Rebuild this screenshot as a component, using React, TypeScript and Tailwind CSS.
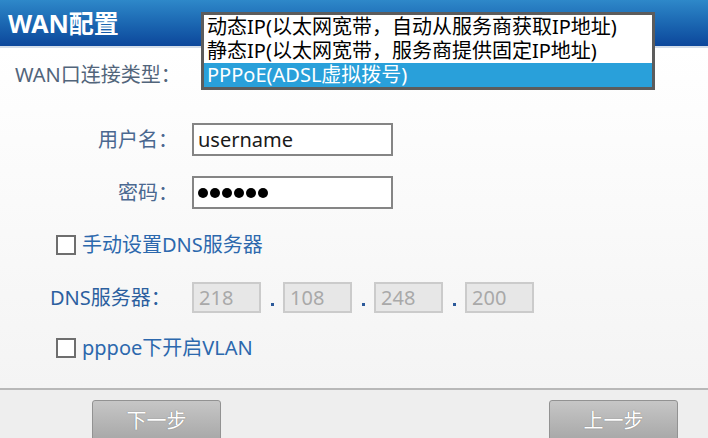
import React from "react";

const font = { fontFamily: '"Noto Sans", "Noto Sans CJK SC", sans-serif' };

function Checkbox({ label }: { label: string }) {
  return (
    <div className="flex items-center h-[20px] pl-[56px]">
      <div className="w-[20px] h-[20px] border-2 border-[#6e6e6e] bg-white" />
      <span className="ml-[6px] text-[20px] leading-none text-[#2c68ad] whitespace-nowrap">{label}</span>
    </div>
  );
}

function DnsBox({ v }: { v: string }) {
  return (
    <div className="w-[69px] h-[31px] border-2 border-[#cbcbcb] bg-[#e7e7e7] flex items-center pl-[5px] text-[20px] text-[#a9a9a9] leading-none">
      {v}
    </div>
  );
}

function Dot() {
  return (
    <div className="w-[22px] h-[31px] flex items-end justify-center pb-[7px]">
      <div className="w-[3px] h-[3px] bg-[#2c5a9a]" />
    </div>
  );
}

export default function App() {
  return (
    <div className="relative w-[708px] h-[438px] overflow-hidden flex flex-col bg-white" style={font}>
      <div className="h-[46px] shrink-0 bg-gradient-to-b from-[#2e88c9] to-[#0d479b] flex items-center pl-[8px]">
        <span className="text-[25px] font-bold text-white leading-none">WAN配置</span>
      </div>
      <div className="h-[2px] shrink-0 bg-[#d3dde9]" />
      <div className="flex-1 flex flex-col pt-[12px] bg-gradient-to-b from-white to-[#f4f4f4]">
        <div className="h-[30px] flex items-center pl-[15px] text-[20px] text-[#52657b] leading-none whitespace-nowrap">
          WAN口连接类型：
        </div>
        <div className="mt-[33px] h-[33px] flex items-center">
          <div className="w-[178px] text-right text-[20px] text-[#4a6890] leading-none whitespace-nowrap">用户名：</div>
          <div className="ml-[14px] w-[201px] h-[33px] border-2 border-[#858585] bg-white flex items-center pl-[4px] text-[20px] text-[#1a1a1a] leading-none">
            username
          </div>
        </div>
        <div className="mt-[20px] h-[33px] flex items-center">
          <div className="w-[178px] text-right text-[20px] text-[#4a6890] leading-none whitespace-nowrap">密码：</div>
          <div className="ml-[14px] w-[201px] h-[33px] border-2 border-[#858585] bg-white flex items-center pl-[4px] gap-[2px]">
            {[0, 1, 2, 3, 4, 5].map((i) => (
              <div key={i} className="w-[10px] h-[10px] rounded-full bg-black" />
            ))}
          </div>
        </div>
        <div className="mt-[26px]">
          <Checkbox label="手动设置DNS服务器" />
        </div>
        <div className="mt-[27px] h-[31px] flex items-center">
          <div className="w-[192px] pl-[50px] text-[20px] text-[#2c5f9f] leading-none whitespace-nowrap">DNS服务器：</div>
          <DnsBox v="218" />
          <Dot />
          <DnsBox v="108" />
          <Dot />
          <DnsBox v="248" />
          <Dot />
          <DnsBox v="200" />
        </div>
        <div className="mt-[25px]">
          <Checkbox label="pppoe下开启VLAN" />
        </div>
      </div>
      <div className="h-[50px] shrink-0 border-t-2 border-[#b8b8b8] bg-[#eeeeee] flex justify-between pl-[92px] pr-[30px] pt-[10px]">
        <div className="w-[129px] h-[46px] border border-[#929292] rounded-t-[3px] bg-gradient-to-b from-[#c6c6c6] to-[#a4a4a4] flex justify-center pt-[10px] text-[20px] text-white leading-none [text-shadow:0_0_1px_#666]">
          下一步
        </div>
        <div className="w-[129px] h-[46px] border border-[#929292] rounded-t-[3px] bg-gradient-to-b from-[#c6c6c6] to-[#a4a4a4] flex justify-center pt-[10px] text-[20px] text-white leading-none [text-shadow:0_0_1px_#666]">
          上一步
        </div>
      </div>
      <div className="absolute left-[201px] top-[12px] w-[454px] border-[3px] border-[#5c5c5c] bg-white text-[20px]">
        <div className="h-[24px] pl-[3px] flex items-center leading-none text-black whitespace-nowrap">动态IP(以太网宽带，自动从服务商获取IP地址)</div>
        <div className="h-[24px] pl-[3px] flex items-center leading-none text-black whitespace-nowrap">静态IP(以太网宽带，服务商提供固定IP地址)</div>
        <div className="h-[24px] pl-[3px] flex items-center leading-none bg-[#29a0da] text-white whitespace-nowrap">PPPoE(ADSL虚拟拨号)</div>
      </div>
    </div>
  );
}
